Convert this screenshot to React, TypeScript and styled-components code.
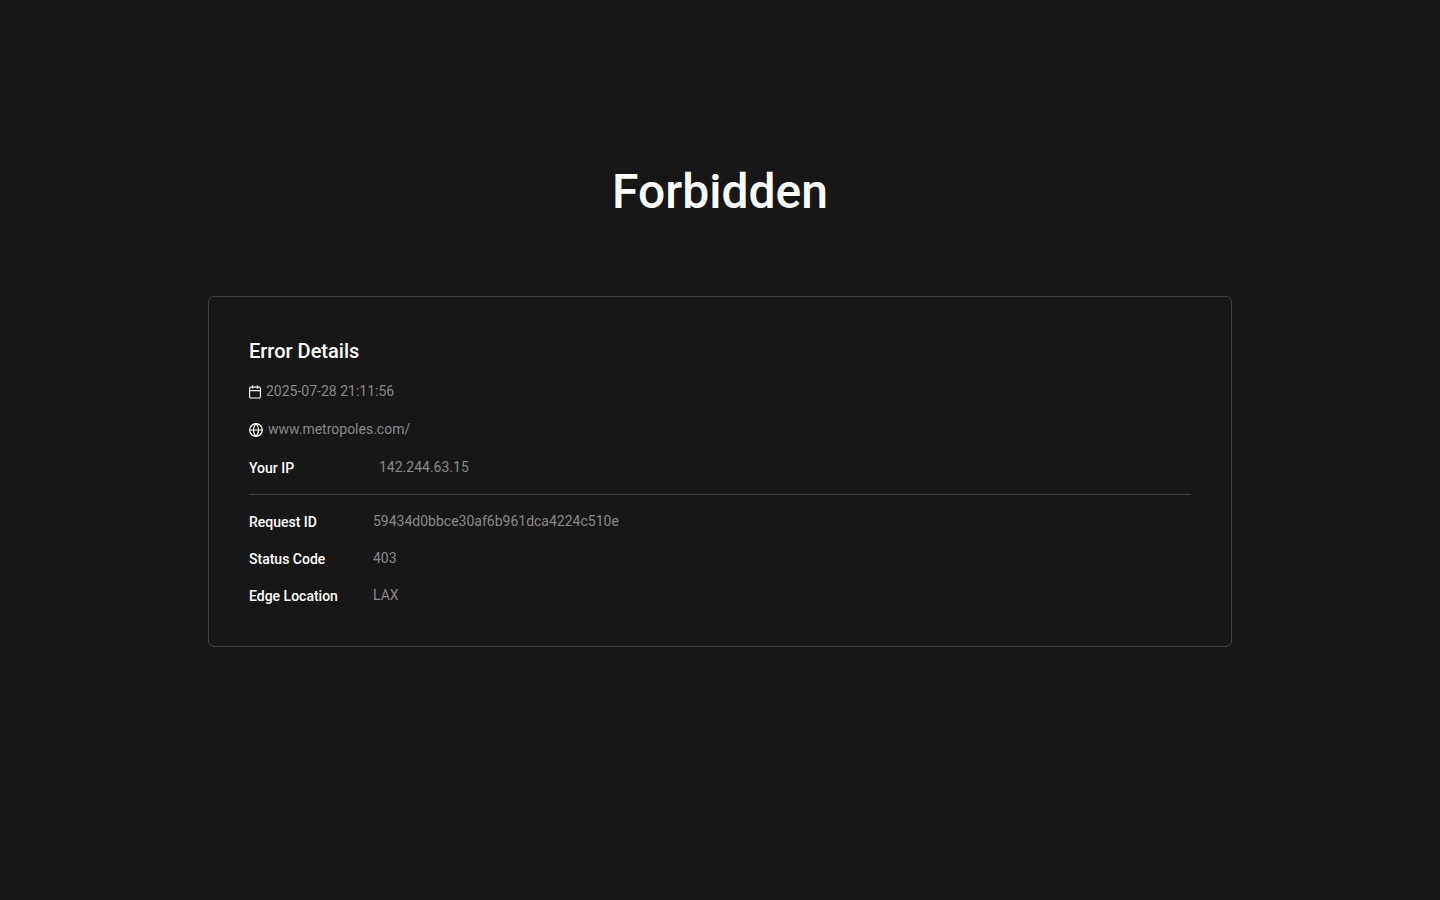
import React from 'react';
import styled, { createGlobalStyle } from 'styled-components';

const GlobalStyle = createGlobalStyle`
  *, *::before, *::after { box-sizing: border-box; }
  body {
    margin: 0;
    background: #171717;
    color: #fff;
    font-family: Roboto, "Liberation Sans", sans-serif;
    font-size: 14px;
    line-height: 21px;
  }
`;

const Main = styled.main`
  max-width: 1072px;
  margin: 0 auto;
  padding: 156px 24px 48px;
`;

const Title = styled.h1`
  margin: 0 0 68px;
  font-size: 48px;
  font-weight: 500;
  line-height: 72px;
  text-align: center;
`;

const Card = styled.section`
  padding: 40px;
  border: 1px solid #404040;
  border-radius: 6px;
`;

const CardTitle = styled.h2`
  margin: 0 0 16px;
  font-size: 20px;
  font-weight: 500;
  line-height: 28px;
`;

const IconRow = styled.p`
  display: flex;
  align-items: center;
  gap: 5px;
  margin: 0 0 17px;
  color: #888;
`;

const Icon = styled.svg`
  flex: none;
  fill: none;
  stroke: #fff;
  stroke-linecap: round;
  stroke-linejoin: round;
`;

const Details = styled.dl`
  display: grid;
  gap: 16px;
  margin: 0;
`;

const Divider = styled.hr`
  height: 1px;
  margin: 16px 0;
  border: 0;
  background: #404040;
`;

const Detail = styled.div<{ $gap?: number }>`
  display: grid;
  grid-template-columns: 124px 1fr;
  column-gap: ${({ $gap = 0 }) => $gap}px;
`;

const Term = styled.dt`
  padding-top: 1px;
  font-weight: 500;
  line-height: 20px;
`;

const Value = styled.dd`
  margin: 0;
  color: #888;
  line-height: 20px;
`;

const details = [
  { term: 'Request ID', value: '59434d0bbce30af6b961dca4224c510e' },
  { term: 'Status Code', value: '403' },
  { term: 'Edge Location', value: 'LAX' },
];

const CalendarIcon = () => (
  <Icon width="12" height="14" viewBox="0 0 12 14" strokeWidth="1.1" aria-hidden="true">
    <rect x="0.6" y="2.1" width="10.8" height="10.9" rx="1.2" />
    <path d="M3.6 0.8v2.5M8.4 0.8v2.5M0.6 5.6h10.8" />
  </Icon>
);

const GlobeIcon = () => (
  <Icon width="14" height="14" viewBox="0 0 14 14" strokeWidth="1.2" aria-hidden="true">
    <circle cx="7" cy="7" r="6.3" />
    <path d="M0.7 7h12.6M7 0.7c1.7 1.7 2.6 3.9 2.6 6.300S8.700 11.600 7 13.300C5.300 11.600 4.400 9.400 4.400 7S5.300 2.400 7 0.700z" />
  </Icon>
);

export default function App() {
  return (
    <>
      <GlobalStyle />
      <Main>
        <Title>Forbidden</Title>
        <Card>
          <CardTitle>Error Details</CardTitle>
          <IconRow>
            <CalendarIcon />
            <time dateTime="2025-07-28T21:11:56">2025-07-28 21:11:56</time>
          </IconRow>
          <IconRow>
            <GlobeIcon />
            <span>www.metropoles.com/</span>
          </IconRow>
          <Details>
            <Detail $gap={6}>
              <Term>Your IP</Term>
              <Value>142.244.63.15</Value>
            </Detail>
          </Details>
          <Divider />
          <Details>
            {details.map(({ term, value }) => (
              <Detail key={term}>
                <Term>{term}</Term>
                <Value>{value}</Value>
              </Detail>
            ))}
          </Details>
        </Card>
      </Main>
    </>
  );
}
